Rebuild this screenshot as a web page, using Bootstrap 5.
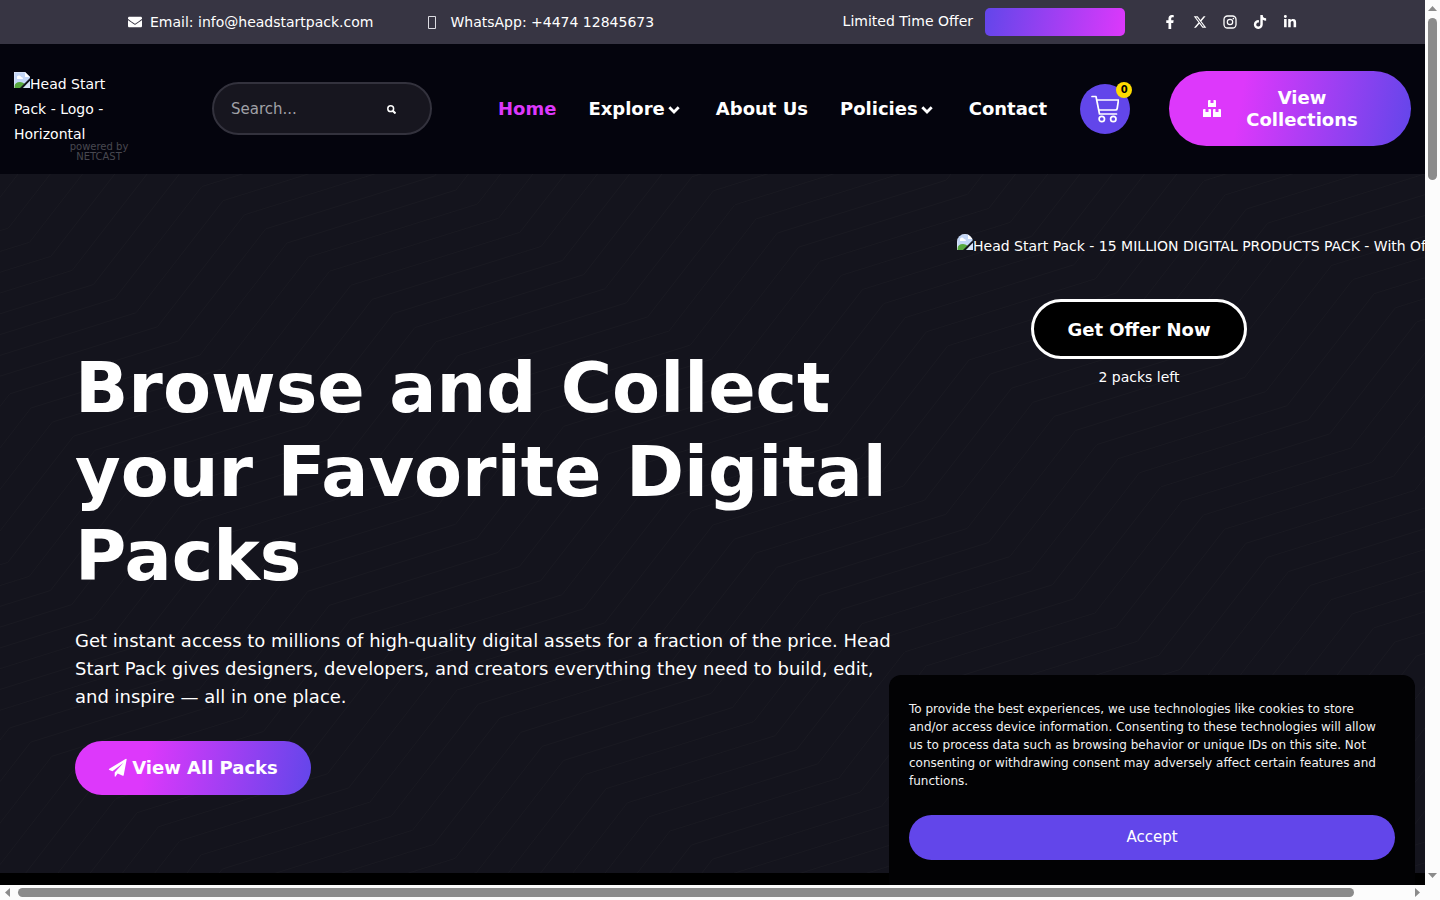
<!DOCTYPE html>
<html lang="en">
<head>
<meta charset="utf-8">
<meta name="viewport" content="width=device-width, initial-scale=1">
<title>Head Start Pack</title>
<link href="https://cdn.jsdelivr.net/npm/bootstrap@5.3.0/dist/css/bootstrap.min.css" rel="stylesheet">
<style>
:root{--violet:#6246ea;--pink:#dd38fb}
body{font:14px/25px "DejaVu Sans",sans-serif;color:#fff;background:#fcfcfc;height:100vh;overflow:hidden}
a{color:inherit;text-decoration:none}
.frame{display:grid;grid-template-columns:minmax(0,1fr) 15px;grid-template-rows:minmax(0,1fr) 15px;height:100vh}
.view{background:#000;overflow:hidden}
.topbar{background:#373543;height:44px;padding:0 128px}
.whatsapp{margin-left:55px;gap:14px}
.offer-label{padding-bottom:2px}
.countdown{width:140px;height:28px;border-radius:5px;background:linear-gradient(100deg,var(--violet),var(--pink));margin:0 38px 0 12px}
.social{gap:16px}
.social svg{width:14px;height:14px;display:block;fill:currentColor}
.masthead{background:#04040d;height:130px;padding:0 14px 1px}
.logo{width:100px;padding-top:1px}
.logo-name{display:block;width:100px}
.pic{width:16px;height:16px;display:inline-block;vertical-align:1px}
.powered{position:absolute;left:50px;top:71px;width:70px;font-size:10px;line-height:10px;color:#484850;text-align:center}
.search{width:220px;height:53px;margin-left:98px;border:2px solid #33323d;border-radius:27px;background:#17161f;padding:0 34px 0 17px}
.search input{font-size:15px;color:#fff;background:none;border:0;outline:0;padding:0;min-width:0;height:40px}
.search input::placeholder{color:#a0a0a6;opacity:1}
.search button{background:none;border:0;padding:0;line-height:1}
.menu{margin-left:66px;gap:32px;font-size:18px;font-weight:700}
.menu .active{color:var(--pink)}
.menu svg{margin:0 4px 0 3px}
.cart{width:50px;height:50px;border-radius:50%;background:var(--violet);margin-left:33px}
.cart-count{position:absolute;right:-2px;top:-2px;width:16px;height:16px;border-radius:50%;background:#ffdc00;color:#000;font-size:10px;font-weight:700;line-height:16px;text-align:center}
.pill{background:linear-gradient(100deg,var(--pink) 30%,var(--violet) 100%);border:0;border-radius:38px;color:#fff;font-weight:700;font-size:18px;line-height:22px}
.collections{width:242px;height:75px;padding:0 44px 0 34px}
.hero{background:#14141d;padding:60px 104px 78px 75px;gap:62px}
.hero-lines{position:absolute;inset:0;width:100%;height:100%}
.intro{padding-top:112px}
.intro h1{font-size:70px;line-height:84px;font-weight:700;margin:0 0 29px}
.intro p{font-size:18px;line-height:28px;margin:0 0 30px}
.packs{width:236px;height:54px}
.offer{width:364px;flex:none}
.offer-pic{line-height:24px;white-space:nowrap;height:65px}
.offer-pic .pic{border-radius:8px 8px 0 0}
.get{width:216px;height:60px;border:3px solid #fff;border-radius:30px;background:#000;color:#fff;font-size:18px;font-weight:700}
.left-note{margin-top:6px;text-align:center;width:100%}
.consent{position:absolute;right:10px;bottom:0;width:526px;background:#020204;border-radius:12px 12px 0 0;padding:25px 20px}
.consent p{font-size:12px;line-height:18px;margin:0 0 25px;padding-right:12px;color:#f1f1f1}
.accept{height:45px;border:0;border-radius:23px;background:var(--violet);color:#fff;font-size:15px}
.rail{gap:4px}
.rail i{background:#8b8b8b;border-radius:5px}
.rail svg{fill:#8b8b8b;flex:none}
.rail-y i{width:9px;height:162px}
.rail-x i{height:9px;flex:0 0 94%}
</style>
</head>
<body>
<svg class="d-none">
  <symbol id="pic" viewBox="0 0 16 16"><path d="M0 0h11l5 5v11H0z" fill="#c4d7f7"/><path d="M11 0v5h5z" fill="#fff"/><path d="M3 6a2 2 0 0 1 4-1 2 2 0 0 1 2 2H3z" fill="#fff"/><path d="M0 16v-1q1-5 6-5 5 0 7 6z" fill="#57a83e"/><path d="M0 0h11M0 0v16" fill="none" stroke="#e9eef8"/><path d="M9 16l7-7V6L6 16z" fill="#14141d"/><path d="M9 16l7-7v7z" fill="#d9e4f8"/></symbol>
</svg>
<div class="frame">
  <div class="view position-relative">
    <div class="topbar d-flex align-items-center">
      <a href="mailto:info@headstartpack.com" class="d-flex align-items-center gap-2"><svg width="14" height="14" viewBox="0 0 512 512" fill="#fff"><path d="M502 191c4-3 10 0 10 5v204c0 27-21 48-48 48H48c-27 0-48-21-48-48V196c0-5 6-8 10-5 22 17 52 40 155 114 21 16 57 49 91 48 34 1 71-33 91-48 103-74 133-97 155-114zM256 320c23 0 57-30 74-42C464 181 474 172 505 148c4-3 7-9 7-14v-22c0-27-21-48-48-48H48c-27 0-48 21-48 48v22c0 5 3 11 7 14 31 24 41 33 175 130 17 12 51 42 74 42z"/></svg>Email: info@headstartpack.com</a>
      <a href="#whatsapp" class="whatsapp d-flex align-items-center"><svg width="8" height="14" viewBox="0 0 8 14"><path d="M.5 1.500h7v12h-7z" fill="none" stroke="#dcdce2"/></svg>WhatsApp: +4474 12845673</a>
      <span class="offer-label ms-auto">Limited Time Offer</span>
      <div class="countdown"></div>
      <div class="social d-flex">
        <a href="#facebook" aria-label="Facebook"><svg viewBox="0 0 320 512"><path d="M279 288l14-93h-89v-60c0-25 13-50 53-50h40V7s-37-7-72-7c-73 0-121 44-121 125v70H23v93h81v224h100V288z"/></svg></a>
        <a href="#x" aria-label="X"><svg viewBox="0 0 512 512"><path d="M389 48h71L306 224l181 240H345L234 319 107 464H36l165-188L27 48h145l101 133zm-25 374h39L151 88h-42z"/></svg></a>
        <a href="#instagram" aria-label="Instagram"><svg viewBox="0 0 14 14" fill="none"><rect x="1" y="1" width="12" height="12" rx="3.500" fill="none" stroke="#fff" stroke-width="1.300"/><circle cx="7" cy="7" r="2.700" fill="none" stroke="#fff" stroke-width="1.200"/><circle cx="10.400" cy="3.600" r=".8"/></svg></a>
        <a href="#tiktok" aria-label="TikTok"><svg viewBox="0 0 448 512"><path d="M448 210a210 210 0 0 1-123-39v179A163 163 0 1 1 185 188v90a75 75 0 1 0 52 71V0h88a121 121 0 0 0 123 122z"/></svg></a>
        <a href="#linkedin" aria-label="LinkedIn"><svg viewBox="0 0 448 512"><path d="M100 448H7V149h93zM54 108a54 54 0 1 1 0-108 54 54 0 0 1 0 108zm394 340h-93V302c0-34-1-79-48-79-49 0-56 38-56 77v148h-93V149h89v41h1c13-24 43-48 88-48 94 0 112 62 112 142z"/></svg></a>
      </div>
    </div>

    <header class="masthead d-flex align-items-center">
      <a href="#home" class="logo position-relative flex-shrink-0"><span class="logo-name"><svg class="pic"><use href="#pic"/></svg>Head Start Pack - Logo - Horizontal</span><span class="powered">powered by NETCAST</span></a>
      <form class="search d-flex align-items-center flex-shrink-0">
        <input class="flex-fill" type="search" placeholder="Search..." aria-label="Search">
        <button type="button" aria-label="Search"><svg width="9" height="9" viewBox="0 0 9 9" fill="none" stroke="#fff" stroke-width="1.500"><circle cx="3.700" cy="3.700" r="2.900"/><path d="M5.800 5.800l2.700 2.700" stroke-width="2"/></svg></button>
      </form>
      <nav class="menu d-flex text-nowrap">
        <a href="#home" class="active">Home</a>
        <a href="#explore">Explore<svg width="12" height="8" viewBox="0 0 12 8"><path d="M1.300 1.300L6 6l4.700-4.700" fill="none" stroke="#fff" stroke-width="2.800"/></svg></a>
        <a href="#about">About Us</a>
        <a href="#policies">Policies<svg width="12" height="8" viewBox="0 0 12 8"><path d="M1.300 1.300L6 6l4.700-4.700" fill="none" stroke="#fff" stroke-width="2.800"/></svg></a>
        <a href="#contact">Contact</a>
      </nav>
      <a href="#cart" class="cart position-relative d-flex align-items-center justify-content-center flex-shrink-0" aria-label="Cart"><svg width="28" height="28" viewBox="0 0 28 28" fill="none" stroke="#fff" stroke-width="1.700" stroke-linecap="round" stroke-linejoin="round"><path d="M1 1.500h4L8.500 19h17M5.800 5h21.700l-1.300 8.500q-.2 1.500-1.700 1.500H8"/><circle cx="10.800" cy="24" r="2.700"/><circle cx="22.300" cy="24" r="2.700"/></svg><span class="cart-count">0</span></a>
      <button type="button" class="pill collections ms-auto d-flex align-items-center flex-shrink-0"><svg class="flex-shrink-0" width="18" height="18" viewBox="0 0 18 18" fill="#fff"><path d="M5 1q0-1 1-1h1.500v3h3V0H12q1 0 1 1v6H5zM0 10q0-1 1-1h1.500v3h3V9H7q1 0 1 1v7H0zM10 10q0-1 1-1h1.500v3h3V9H17q1 0 1 1v7h-8z"/></svg><span class="flex-fill ps-3">View Collections</span></button>
    </header>

    <main class="hero position-relative d-flex align-items-start">
      <svg class="hero-lines" aria-hidden="true"><path id="lines" fill="none" stroke="#1a1a22"/></svg>
      <section class="intro position-relative flex-fill">
        <h1>Browse and Collect your Favorite Digital Packs</h1>
        <p>Get instant access to millions of high-quality digital assets for a fraction of the price. Head Start Pack gives designers, developers, and creators everything they need to build, edit, and inspire — all in one place.</p>
        <button type="button" class="pill packs d-flex align-items-center justify-content-center gap-1"><svg width="20" height="20" viewBox="0 0 20 20" fill="#fff"><path d="M18.700 1.200l-3 16q-.2.900-1 .5l-5-2.200L7.500 18.500q-.8.800-.8-.5v-3.500L15.500 4.800 4.500 13.200 1.300 11.900q-1-.5 0-1.100L17.500 1q1-.6 1.200.2z"/></svg>View All Packs</button>
      </section>
      <aside class="offer position-relative d-flex flex-column align-items-center">
        <div class="offer-pic w-100"><svg class="pic"><use href="#pic"/></svg>Head Start Pack - 15 MILLION DIGITAL PRODUCTS PACK - With Offer</div>
        <button type="button" class="get">Get Offer Now</button>
        <div class="left-note">2 packs left</div>
      </aside>
    </main>

    <div class="consent">
      <p>To provide the best experiences, we use technologies like cookies to store and/or access device information. Consenting to these technologies will allow us to process data such as browsing behavior or unique IDs on this site. Not consenting or withdrawing consent may adversely affect certain features and functions.</p>
      <button type="button" class="accept w-100 d-block">Accept</button>
    </div>
  </div>
  <div class="rail rail-y d-flex flex-column align-items-center pt-1"><svg width="9" height="10" viewBox="0 0 9 10"><path d="M0 7l4.500-5L9 7z"/></svg><i></i><svg class="mt-auto mb-1" width="9" height="10" viewBox="0 0 9 10"><path d="M0 2h9L4.500 7z"/></svg></div>
  <div class="rail rail-x d-flex align-items-center ps-1"><svg width="10" height="9" viewBox="0 0 10 9"><path d="M6 0v9L1 4.500z"/></svg><i></i><svg class="ms-auto me-1" width="10" height="9" viewBox="0 0 10 9"><path d="M4 0v9l5-4.500z"/></svg></div>
</div>
<script src="https://cdn.jsdelivr.net/npm/bootstrap@5.3.0/dist/js/bootstrap.bundle.min.js"></script>
<script>
// Nested zigzag lines: every line repeats a steep and a shallow stroke,
// and each one is the previous line shifted by (21.3, 14.1).
let d = '';
for (let k = -60; k < 75; k++) {
  // The starting corner lies five periods to the lower left of (200, 181).
  d += `M${200 - 256 * 5 + 21.3 * k} ${181 + 165 * 5 + 14.1 * k}`;
  for (let i = 0; i < 14; i++) d += 'l87-112 169-53';
}
document.getElementById('lines').setAttribute('d', d);
</script>
</body>
</html>
